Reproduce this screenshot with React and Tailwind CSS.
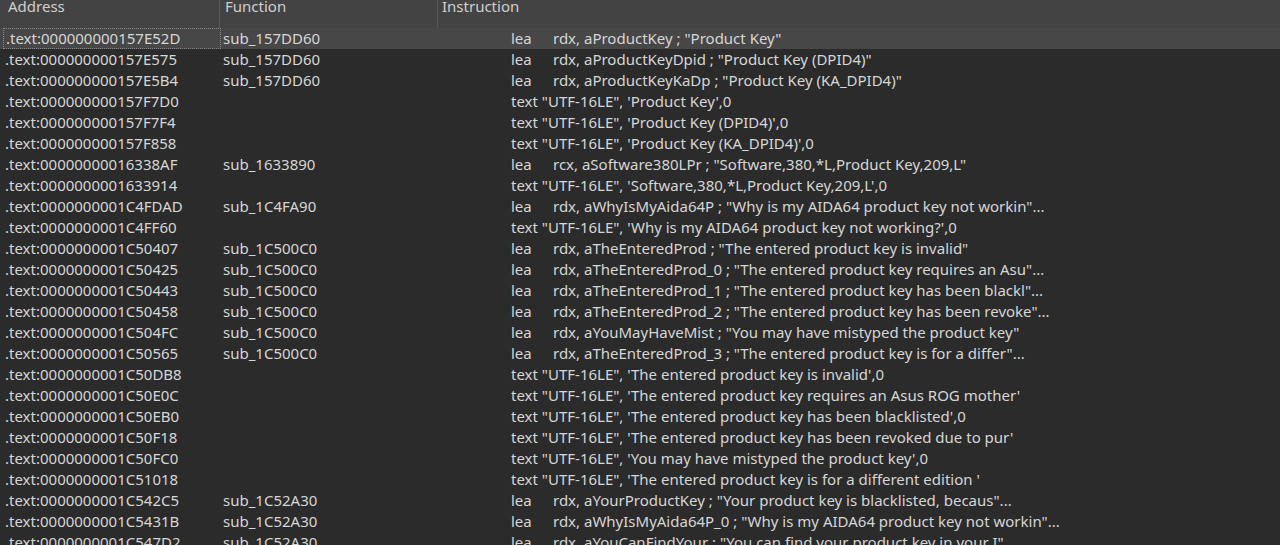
import React from 'react';

const rows = [
  ['.text:000000000157E52D', 'sub_157DD60', 'lea', 'rdx, aProductKey ; "Product Key"'],
  ['.text:000000000157E575', 'sub_157DD60', 'lea', 'rdx, aProductKeyDpid ; "Product Key (DPID4)"'],
  ['.text:000000000157E5B4', 'sub_157DD60', 'lea', 'rdx, aProductKeyKaDp ; "Product Key (KA_DPID4)"'],
  ['.text:000000000157F7D0', '', 'text', `"UTF-16LE", 'Product Key',0`],
  ['.text:000000000157F7F4', '', 'text', `"UTF-16LE", 'Product Key (DPID4)',0`],
  ['.text:000000000157F858', '', 'text', `"UTF-16LE", 'Product Key (KA_DPID4)',0`],
  ['.text:00000000016338AF', 'sub_1633890', 'lea', 'rcx, aSoftware380LPr ; "Software,380,*L,Product Key,209,L"'],
  ['.text:0000000001633914', '', 'text', `"UTF-16LE", 'Software,380,*L,Product Key,209,L',0`],
  ['.text:0000000001C4FDAD', 'sub_1C4FA90', 'lea', 'rdx, aWhyIsMyAida64P ; "Why is my AIDA64 product key not workin"...'],
  ['.text:0000000001C4FF60', '', 'text', `"UTF-16LE", 'Why is my AIDA64 product key not working?',0`],
  ['.text:0000000001C50407', 'sub_1C500C0', 'lea', 'rdx, aTheEnteredProd ; "The entered product key is invalid"'],
  ['.text:0000000001C50425', 'sub_1C500C0', 'lea', 'rdx, aTheEnteredProd_0 ; "The entered product key requires an Asu"...'],
  ['.text:0000000001C50443', 'sub_1C500C0', 'lea', 'rdx, aTheEnteredProd_1 ; "The entered product key has been blackl"...'],
  ['.text:0000000001C50458', 'sub_1C500C0', 'lea', 'rdx, aTheEnteredProd_2 ; "The entered product key has been revoke"...'],
  ['.text:0000000001C504FC', 'sub_1C500C0', 'lea', 'rdx, aYouMayHaveMist ; "You may have mistyped the product key"'],
  ['.text:0000000001C50565', 'sub_1C500C0', 'lea', 'rdx, aTheEnteredProd_3 ; "The entered product key is for a differ"...'],
  ['.text:0000000001C50DB8', '', 'text', `"UTF-16LE", 'The entered product key is invalid',0`],
  ['.text:0000000001C50E0C', '', 'text', `"UTF-16LE", 'The entered product key requires an Asus ROG mother'`],
  ['.text:0000000001C50EB0', '', 'text', `"UTF-16LE", 'The entered product key has been blacklisted',0`],
  ['.text:0000000001C50F18', '', 'text', `"UTF-16LE", 'The entered product key has been revoked due to pur'`],
  ['.text:0000000001C50FC0', '', 'text', `"UTF-16LE", 'You may have mistyped the product key',0`],
  ['.text:0000000001C51018', '', 'text', `"UTF-16LE", 'The entered product key is for a different edition '`],
  ['.text:0000000001C542C5', 'sub_1C52A30', 'lea', 'rdx, aYourProductKey ; "Your product key is blacklisted, becaus"...'],
  ['.text:0000000001C5431B', 'sub_1C52A30', 'lea', 'rdx, aWhyIsMyAida64P_0 ; "Why is my AIDA64 product key not workin"...'],
  ['.text:0000000001C547D2', 'sub_1C52A30', 'lea', 'rdx, aYouCanFindYour ; "You can find your product key in your I"'],
];

export default function App() {
  return (
    <div className="w-[1280px] h-[545px] overflow-hidden bg-[#2b2b2b] text-[#d6d6d6] text-[15px] font-['Noto_Sans',sans-serif]">
      {/* header */}
      <div className="flex h-[28px] bg-[#434343] overflow-hidden">
        <div className="w-[220px] border-r border-[#585858] pl-[8px] leading-[12px] text-[#cfcfcf]">Address</div>
        <div className="w-[218px] border-r border-[#585858] pl-[5px] leading-[12px] text-[#cfcfcf]">Function</div>
        <div className="flex-1 pl-[4px] leading-[12px] text-[#cfcfcf]">Instruction</div>
      </div>

      {rows.map(([addr, fn, op, args], i) => (
        <div
          key={i}
          className={`flex h-[21px] items-center whitespace-nowrap ${i === 0 ? 'bg-[#474747]' : ''}`}
        >
          <div className={`w-[218px] ml-[3px] h-[21px] flex items-center pl-[2px] ${i === 0 ? 'border border-dotted border-[#8a8a8a]' : ''}`}>
            {addr}
          </div>
          <div className="w-[290px] pl-[2px]">{fn}</div>
          {op === 'lea' ? (
            <>
              <div className="w-[42px]">{op}</div>
              <div>{args}</div>
            </>
          ) : (
            <div>{op} {args}</div>
          )}
        </div>
      ))}
    </div>
  );
}
